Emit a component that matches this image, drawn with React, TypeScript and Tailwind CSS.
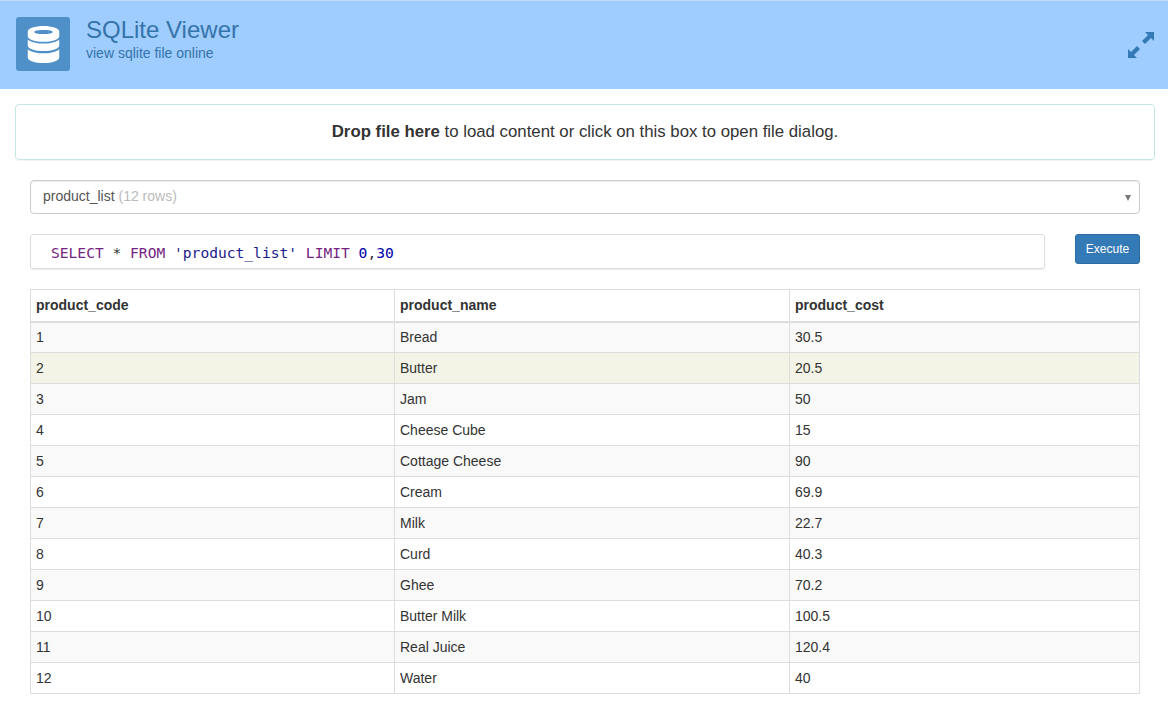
import React from 'react';

const rows = [
  ['1', 'Bread', '30.5'],
  ['2', 'Butter', '20.5'],
  ['3', 'Jam', '50'],
  ['4', 'Cheese Cube', '15'],
  ['5', 'Cottage Cheese', '90'],
  ['6', 'Cream', '69.9'],
  ['7', 'Milk', '22.7'],
  ['8', 'Curd', '40.3'],
  ['9', 'Ghee', '70.2'],
  ['10', 'Butter Milk', '100.5'],
  ['11', 'Real Juice', '120.4'],
  ['12', 'Water', '40'],
];

function DatabaseIcon() {
  return (
    <svg width="33" height="37" viewBox="0 0 34 40" fill="#fff">
      <path
        fillRule="evenodd"
        d="M17 0C8 0 0 2.400 0 6v5c0 3.600 8 6 17 6s17-2.400 17-6V6c0-3.600-8-6-17-6zm0 4.200c6 0 10 .9 10 2.200S23 8.600 17 8.600 7 7.700 7 6.400s4-2.200 10-2.200z"
      />
      <path d="M0 14.500v6.500c0 3.600 8 6 17 6s17-2.400 17-6v-6.500c-3 3-10 4.500-17 4.500S3 17.500 0 14.500z" />
      <path d="M0 25v9c0 3.600 8 6 17 6s17-2.400 17-6v-9c-3 3-10 4.500-17 4.500S3 28 0 25z" />
    </svg>
  );
}

function ExpandIcon() {
  return (
    <svg width="28" height="28" viewBox="0 0 28 28" fill="#337ab7" className="mt-[14px]">
      <path d="M18 1h9v9l-3-3-6 6-3-3 6-6z" />
      <path d="M10 27H1v-9l3 3 6-6 3 3-6 6z" />
    </svg>
  );
}

export default function App() {
  return (
    <div className="min-h-[712px] bg-white font-['Liberation_Sans',Arial,sans-serif] text-[14px] text-[#333]">
      {/* Header */}
      <header className="flex h-[89px] items-start justify-between border-t border-[#c3dcf5] bg-[#9fcdff] pt-4 pl-4 pr-[13px]">
        <div className="flex items-start gap-4">
          <div className="flex h-[54px] w-[54px] items-center justify-center rounded-[3px] bg-[#4f90c8]">
            <DatabaseIcon />
          </div>
          <div>
            <h1 className="text-[24px] leading-[26px] font-normal text-[#3573aa]">SQLite Viewer</h1>
            <p className="text-[14px] leading-[20px] text-[#3573aa]">view sqlite file online</p>
          </div>
        </div>
        <ExpandIcon />
      </header>

      {/* Drop zone */}
      <div className="mt-[15px] mr-[13px] ml-[15px] flex h-[56px] items-center justify-center rounded-[4px] border border-[#c5e8e6] text-[16.8px] shadow-[0_1px_1px_rgba(0,0,0,0.05)]">
        <span>
          <b>Drop file here</b> to load content or click on this box to open file dialog.
        </span>
      </div>

      <div className="pt-5 pr-[28px] pl-[30px]">
        {/* Table selector */}
        <div className="flex h-[34px] items-center justify-between rounded-[4px] border border-[#ccc] pr-[8px] pb-[2px] pl-3 text-[#555] shadow-[inset_0_1px_1px_rgba(0,0,0,0.075)]">
          <span>
            product_list <span className="text-[#bbb]">(12 rows)</span>
          </span>
          <span className="mt-[3px] h-0 w-0 border-x-[3.5px] border-t-[6px] border-x-transparent border-t-[#777]" />
        </div>

        {/* Query */}
        <div className="mt-5 flex items-start justify-between">
          <div className="flex h-[35px] w-[1015px] items-center rounded-[3px] border border-[#ddd] pt-[2px] pl-5 font-['DejaVu_Sans_Mono',monospace] text-[14.6px] whitespace-pre text-[#333] shadow-[0_1px_1px_rgba(0,0,0,0.08)]">
            <span className="text-[#752580]">SELECT</span>
            <span> * </span>
            <span className="text-[#752580]">FROM</span>
            <span> </span>
            <span className="text-[#1a1a8c]">'product_list'</span>
            <span> </span>
            <span className="text-[#752580]">LIMIT</span>
            <span> </span>
            <span className="text-[#0000aa]">0</span>
            <span>,</span>
            <span className="text-[#0000aa]">30</span>
          </div>
          <button className="h-[30px] w-[65px] rounded-[3px] border border-[#2e6da4] bg-[#337ab7] text-[12px] text-white">
            Execute
          </button>
        </div>

        {/* Results */}
        <table className="mt-5 w-[1109px] table-fixed border-collapse border border-[#ddd]">
          <colgroup>
            <col className="w-[364px]" />
            <col className="w-[395px]" />
            <col className="w-[350px]" />
          </colgroup>
          <thead>
            <tr className="h-[32px]">
              {['product_code', 'product_name', 'product_cost'].map(name => (
                <th key={name} className="border border-b-2 border-[#ddd] px-[5px] py-0 text-left font-bold">
                  {name}
                </th>
              ))}
            </tr>
          </thead>
          <tbody>
            {rows.map((row, index) => (
              <tr
                key={row[0]}
                className={`h-[31px] ${index === 1 ? 'bg-[#f4f4e6]' : index % 2 === 0 ? 'bg-[#f9f9f9]' : 'bg-white'}`}
              >
                {row.map((cell, i) => (
                  <td key={i} className="border border-[#ddd] px-[5px] py-0">
                    {cell}
                  </td>
                ))}
              </tr>
            ))}
          </tbody>
        </table>
      </div>
    </div>
  );
}
